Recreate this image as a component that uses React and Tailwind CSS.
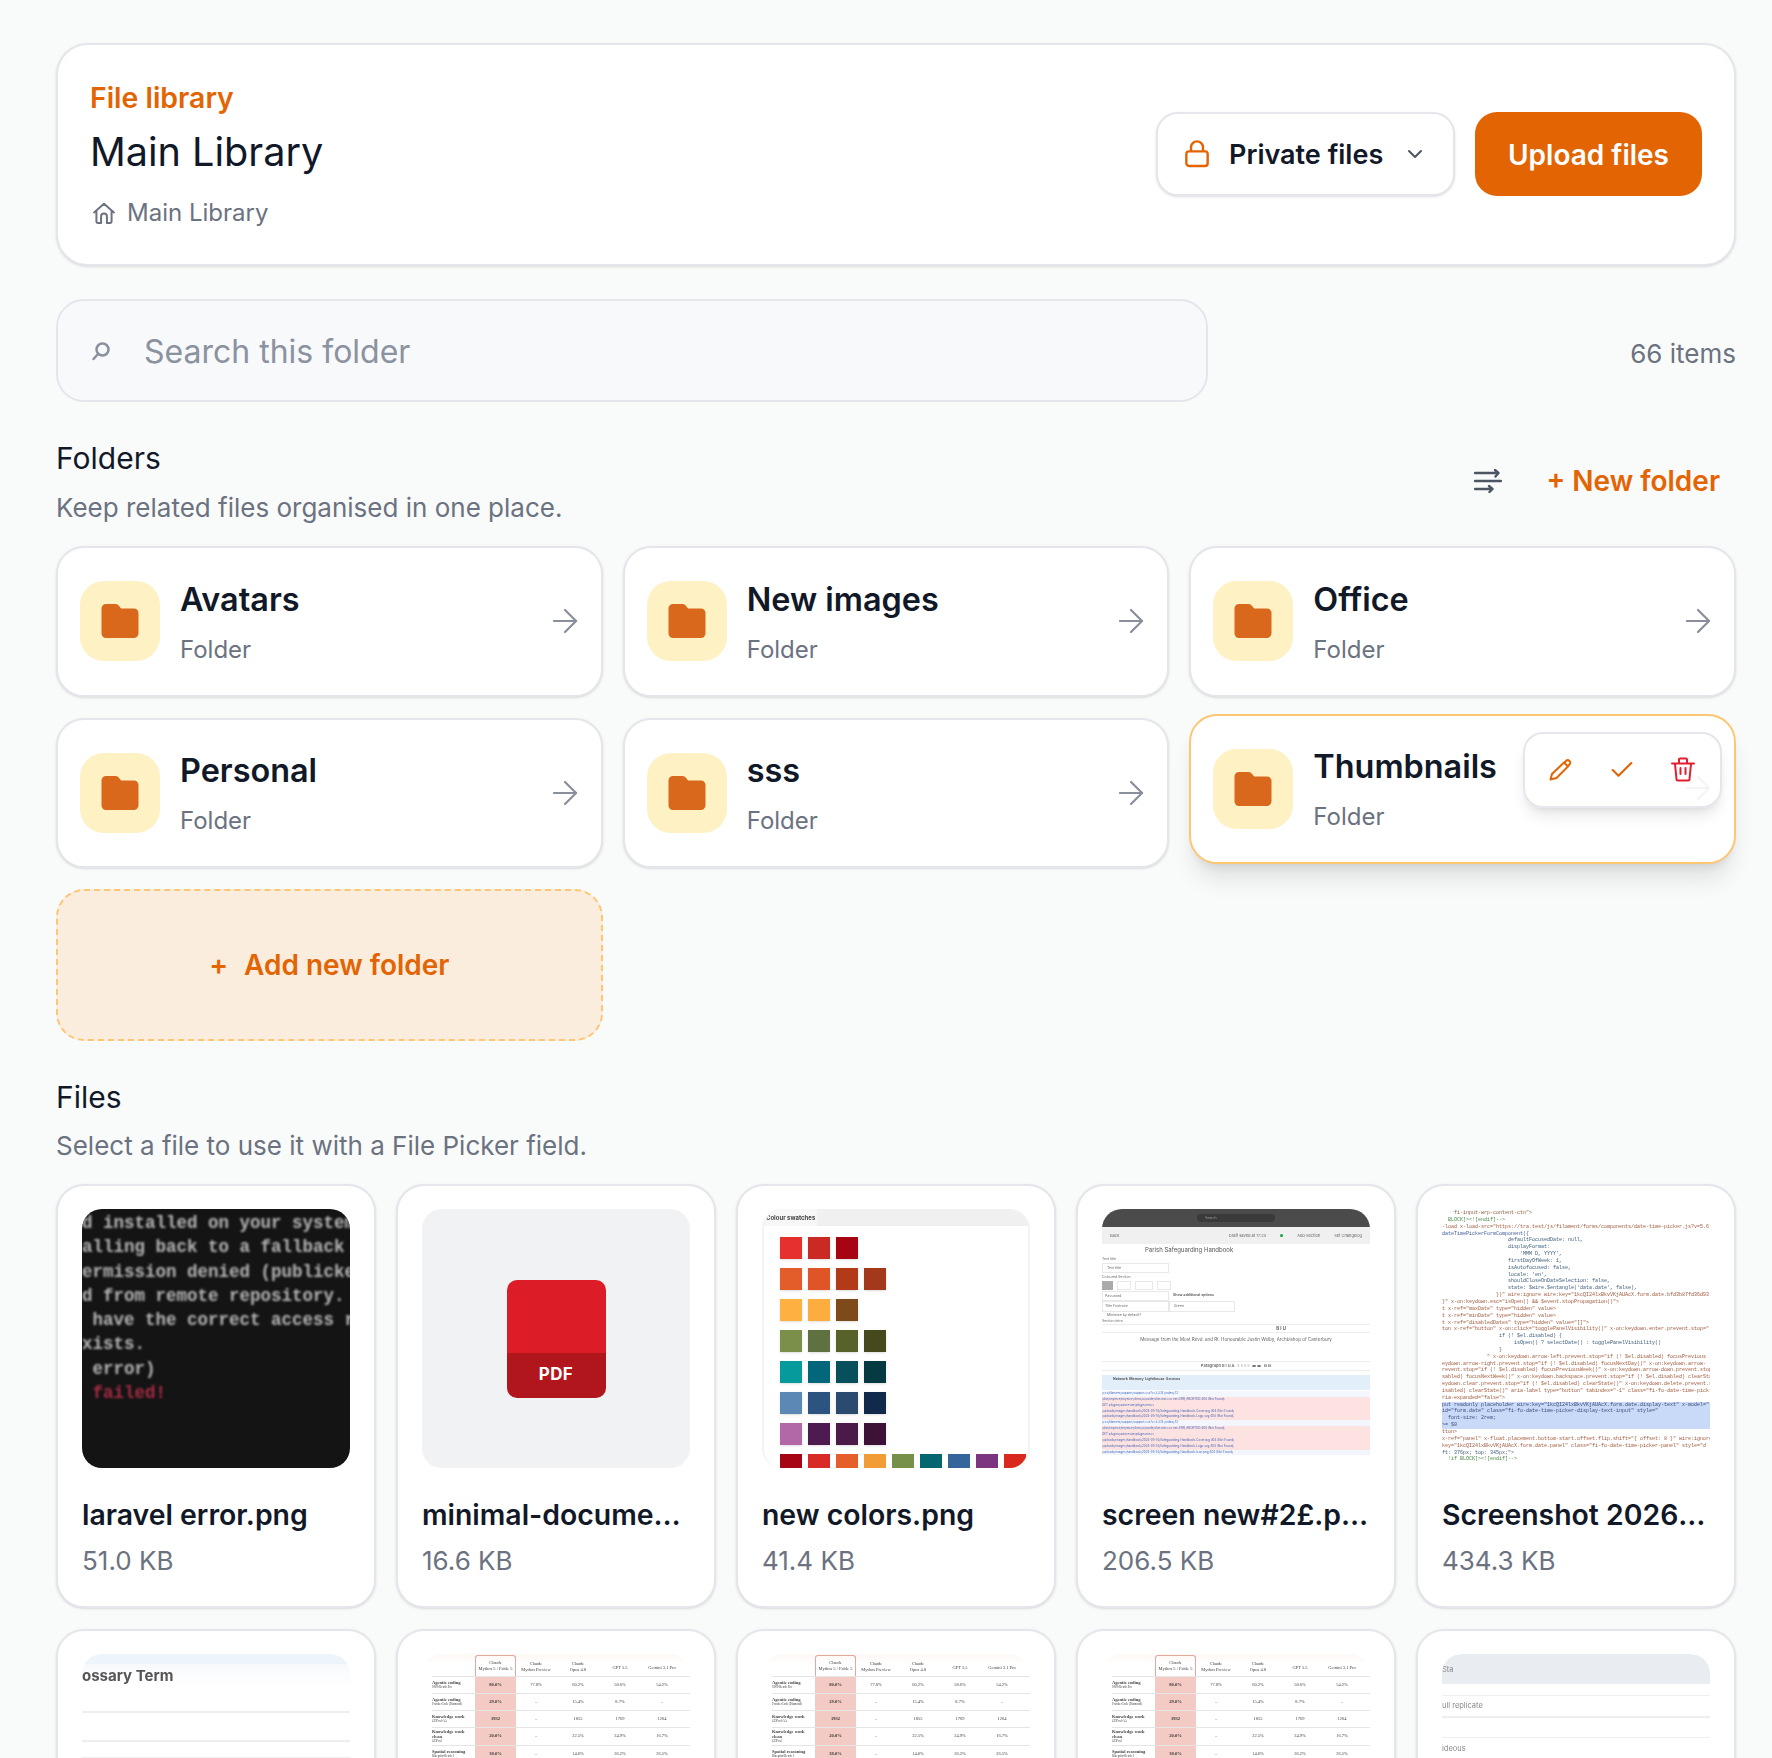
import React from "react"
import { ArrowRight, Check, ChevronDown } from "lucide-react"

const folders = ["Avatars", "New images", "Office", "Personal", "sss"]

const FolderIcon = () => (
	<div className="flex h-20 w-20 shrink-0 items-center justify-center rounded-[24px] bg-[#fef1c4]">
		<svg className="h-9 w-[38px] text-[#d9681d]" viewBox="0 0 38 36" fill="currentColor">
			<path d="M5 1h9.5c1.6 0 2.6.7 3.6 2l2 2.4H33c2.5 0 4.5 2 4.5 4.500V30c0 2.800-2 5-4.500 5H5c-2.700 0-4.500-2.200-4.500-5V5.500C.5 3 2.500 1 5 1z" />
		</svg>
	</div>
)

const FolderCard = ({ name }) => (
	<div className="flex h-[150.500px] items-center gap-5 rounded-[28px] border-2 border-[#e5e6ec] bg-white pl-[22px] pr-[17px] shadow-sm">
		<FolderIcon />
		<div className="min-w-0 flex-1 pt-[3px]">
			<div className="text-[32.400px] leading-[44px] font-semibold text-[#111827]">{name}</div>
			<div className="mt-[10px] text-[24px] leading-[36px] text-[#6b7280]">Folder</div>
		</div>
		<ArrowRight className="h-[38px] w-[38px] text-[#8a8f9c]" strokeWidth={1.4} />
	</div>
)

const terminalLines = [
	["d installed on your system", "text-[#b5b5b5]"],
	["alling back to a fallback", "text-[#b5b5b5]"],
	["ermission denied (publickey", "text-[#b5b5b5]"],
	["d from remote repository.", "text-[#b5b5b5]"],
	[" have the correct access r", "text-[#b5b5b5]"],
	["xists.", "text-[#b5b5b5]"],
	[" error)", "text-[#b5b5b5]"],
	[" failed!", "text-[#a52c42]"],
]

const TerminalThumb = () => (
	<div className="h-[259px] overflow-hidden rounded-[20px] bg-[#141414] pt-[2px]">
		<div className="blur-[1px]">
			{terminalLines.map(([line, color], i) => (
				<div key={i} className={`whitespace-pre font-['Liberation_Mono',monospace] text-[17.500px] leading-[24.300px] font-bold ${color}`}>
					{line}
				</div>
			))}
		</div>
	</div>
)

const PdfThumb = () => (
	<div className="flex h-[259px] items-center justify-center rounded-[20px] bg-[#f1f2f4]">
		<div className="flex h-[118px] w-[99px] flex-col overflow-hidden rounded-[10px]">
			<div className="h-[73px] bg-[#dc1c26]" />
			<div className="flex flex-1 items-center justify-center bg-[#b1161d] text-[17px] font-bold tracking-wide text-white">PDF</div>
		</div>
	</div>
)

const swatchRows = [
	["bg-[#e5302d]", "bg-[#c92a24]", "bg-[#a80313]"],
	["bg-[#e35d2b]", "bg-[#df5527]", "bg-[#b23a18]", "bg-[#a3381b]"],
	["bg-[#feb041]", "bg-[#fdad3f]", "bg-[#7f4a1a]"],
	["bg-[#7c8f4a]", "bg-[#5f7140]", "bg-[#56622a]", "bg-[#45491d]"],
	["bg-[#069a9c]", "bg-[#03677b]", "bg-[#064f5b]", "bg-[#053a42]"],
	["bg-[#5b88b5]", "bg-[#2d5480]", "bg-[#2a4a70]", "bg-[#11294a]"],
	["bg-[#b267a6]", "bg-[#4d1b4f]", "bg-[#4c1a48]", "bg-[#3c1238]"],
]

const lastSwatches = ["bg-[#a70414]", "bg-[#d92b26]", "bg-[#e65f2b]", "bg-[#f19c34]", "bg-[#76904a]", "bg-[#04676f]", "bg-[#34659b]", "bg-[#7c3580]", "bg-[#d9291f]"]

const SwatchThumb = () => (
	<div className="h-[259px] overflow-hidden rounded-[20px] border-x-2 border-[#f3f3f3] bg-white">
		<div className="flex h-[17px] bg-[#f0f0f0]">
			<div className="h-[17px] bg-[#f7f7f7] px-[2px] text-[6px] leading-[17px] font-bold text-[#444] blur-[0.3px]">Colour swatches</div>
		</div>
		<div className="flex flex-col gap-[9px] pl-[16px] pt-[11px]">
			{swatchRows.map((row, i) => (
				<div key={i} className="flex gap-[6px]">
					{row.map(color => <div key={color} className={`h-[22px] w-[22px] shadow-sm ${color}`} />)}
				</div>
			))}
			<div className="flex gap-[6px]">
				{lastSwatches.map(color => <div key={color} className={`h-[22px] w-[22px] shrink-0 ${color}`} />)}
			</div>
		</div>
	</div>
)

const logRows = [
	"/css/filament/support/support.css?v=3.3.14 (index):12",
	"/dist/tinymce/tinymce/skins/ui/oxide/skin.min.css net::ERR_ABORTED 404 (Not Found)",
	"GET plugins/autoresize/plugin.min.js",
	"/uploads/images/handbook/2024-05-14/Safeguarding-Handbook-Cover.jpg 404 (Not Found)",
	"/uploads/images/handbook/2024-05-14/Safeguarding-Handbook-Logo.svg 404 (Not Found)",
	"/css/filament/support/support.css?v=3.3.14 (index):12",
	"/dist/tinymce/tinymce/skins/ui/oxide/skin.min.css net::ERR_ABORTED 404 (Not Found)",
	"GET plugins/autoresize/plugin.min.js",
	"/uploads/images/handbook/2024-05-14/Safeguarding-Handbook-Cover.jpg 404 (Not Found)",
	"/uploads/images/handbook/2024-05-14/Safeguarding-Handbook-Logo.svg 404 (Not Found)",
	"/uploads/images/handbook/2024-05-14/Safeguarding-Handbook-Icon.png 404 (Not Found)",
]

const ScreenThumb = () => (
	<div className="h-[259px] overflow-hidden rounded-t-[20px] bg-white text-[#666]">
		<div className="blur-[0.35px]">
			<div className="flex h-[18px] items-center justify-center bg-[#4b4b4b]">
				<div className="h-[8px] w-[78px] rounded bg-[#3a3a3a] pl-2 text-[3.500px] leading-[8px] text-[#999]">Search</div>
			</div>
			<div className="flex h-[17px] items-center justify-between bg-[#f0f0f0] pl-[8px] pr-[8px] text-[4px]">
				<span>Back</span>
				<span className="flex items-center gap-[14px]">
					<span>Draft saved at 17:24</span>
					<span className="h-[3px] w-[3px] rounded-full bg-green-600" />
					<span>Add Section</span>
					<span>Set Changelog</span>
				</span>
			</div>
			<div className="h-[12px] pl-[43px] text-[6px] leading-[12px] text-[#555]">Parish Safeguarding Handbook</div>
			<div className="h-[7px] text-[3.500px] leading-[7px]">Text title</div>
			<div className="h-[10px] w-[67px] border border-[#e8e8e8] pl-1 text-[3.500px] leading-[8px]">Text title</div>
			<div className="h-[8px] text-[3.500px] leading-[8px]">Coloured Section</div>
			<div className="flex h-[10px] gap-[4px]">
				<div className="h-[9px] w-[11px] bg-[#aaa]" />
				<div className="h-[9px] w-[14px] border border-[#e8e8e8]" />
				<div className="h-[9px] w-[18px] border border-[#e8e8e8]" />
				<div className="h-[9px] w-[14px] border border-[#e8e8e8]" />
			</div>
			<div className="flex h-[10px] text-[3.500px] leading-[9px]">
				<div className="w-[67px] border border-[#e8e8e8] pl-[2px]">Password</div>
				<div className="pl-1 font-bold">Show additional options</div>
			</div>
			<div className="flex h-[11px] text-[3.500px] leading-[9px]">
				<div className="w-[67px] border border-[#e8e8e8] pl-[2px]">Title Footnote</div>
				<div className="w-[66px] border border-[#e8e8e8] pl-1">Green</div>
			</div>
			<div className="h-[6px] pl-[5px] text-[3.500px] leading-[6px]">Minimize by default?</div>
			<div className="h-[6px] text-[3.500px] leading-[6px]">Section intro</div>
			<div className="h-[9px] border-y border-[#ececec] pr-[84px] text-right text-[4.500px] leading-[7px] font-bold">B I U</div>
			<div className="h-[23px] pt-[4px] text-center text-[4.500px] leading-[6px]">Message from the Most Revd. and Rt. Honourable Justin Welby, Archbishop of Canterbury</div>
			<div className="mt-[5px] flex h-[10px] items-center justify-center gap-[3px] border-y border-[#ececec] text-[4px] font-bold text-[#777]">
				Paragraph B I U A &nbsp; ≡ ≡ ≡ ≡ &nbsp; ≔ ≔ &nbsp; ⧉ ⧉
			</div>
			<div className="mt-[4px] h-[15px] bg-[#e3eefb] pl-[11px] text-[3.500px] leading-[9px] font-bold text-[#555]">Network &nbsp;Memory &nbsp;Lighthouse &nbsp;Sources</div>
			<div className="mt-[1px]">
				{logRows.map((row, i) => (
					<div key={i} className={`h-[5.870px] overflow-hidden whitespace-nowrap text-[3px] leading-[5.870px] text-[#4468b8] ${i % 5 === 0 ? "bg-[#f3f7fd]" : "bg-[#fde2e2]"}`}>
						{row}
					</div>
				))}
			</div>
		</div>
	</div>
)

const codeLines = [
	["  =\"fi-input-wrp-content-ctn\">", "text-[#8a5a3a]"],
	["  BLOCK]><![endif]-->", "text-[#4a8a4a]"],
	["-load x-load-src=\"https://tra.test/js/filament/forms/components/date-time-picker.js?v=5.6", "text-[#a0583a]"],
	["dateTimePickerFormComponent({", "text-[#3a5a9a]"],
	["                      defaultFocusedDate: null,", "text-[#3a5a7a]"],
	["                      displayFormat:", "text-[#3a5a7a]"],
	["                          'MMM D, YYYY',", "text-[#3a5a7a]"],
	["                      firstDayOfWeek: 1,", "text-[#3a5a7a]"],
	["                      isAutofocused: false,", "text-[#3a5a7a]"],
	["                      locale: 'en',", "text-[#3a5a7a]"],
	["                      shouldCloseOnDateSelection: false,", "text-[#3a5a7a]"],
	["                      state: $wire.$entangle('data.date', false),", "text-[#3a5a7a]"],
	["                  })\" wire:ignore wire:key=\"1kcQI24lxBkvVKjAUAcX.form.date.bfd3b87fd36d93", "text-[#a0583a]"],
	["}\" x-on:keydown.esc=\"isOpen() && $event.stopPropagation()\">", "text-[#a0583a]"],
	["t x-ref=\"maxDate\" type=\"hidden\" value>", "text-[#a0583a]"],
	["t x-ref=\"minDate\" type=\"hidden\" value>", "text-[#a0583a]"],
	["t x-ref=\"disabledDates\" type=\"hidden\" value=\"[]\">", "text-[#a0583a]"],
	["ton x-ref=\"button\" x-on:click=\"togglePanelVisibility()\" x-on:keydown.enter.prevent.stop=\"", "text-[#a0583a]"],
	["                   if (! $el.disabled) {", "text-[#3a5a7a]"],
	["                        isOpen() ? selectDate() : togglePanelVisibility()", "text-[#3a5a7a]"],
	["                   }", "text-[#3a5a7a]"],
	["               \" x-on:keydown.arrow-left.prevent.stop=\"if (! $el.disabled) focusPrevious", "text-[#a0583a]"],
	["eydown.arrow-right.prevent.stop=\"if (! $el.disabled) focusNextDay()\" x-on:keydown.arrow-", "text-[#a0583a]"],
	["revent.stop=\"if (! $el.disabled) focusPreviousWeek()\" x-on:keydown.arrow-down.prevent.stop", "text-[#a0583a]"],
	["sabled) focusNextWeek()\" x-on:keydown.backspace.prevent.stop=\"if (! $el.disabled) clearSta", "text-[#a0583a]"],
	["eydown.clear.prevent.stop=\"if (! $el.disabled) clearState()\" x-on:keydown.delete.prevent.s", "text-[#a0583a]"],
	["isabled) clearState()\" aria-label type=\"button\" tabindex=\"-1\" class=\"fi-fo-date-time-pick", "text-[#a0583a]"],
	["ria-expanded=\"false\">", "text-[#a0583a]"],
	["put readonly placeholder wire:key=\"1kcQI24lxBkvVKjAUAcX.form.date.display-text\" x-model=\"", "bg-[#c9d9f8] text-[#3a4a7a]"],
	["id=\"form.date\" class=\"fi-fo-date-time-picker-display-text-input\" style=\"", "bg-[#c9d9f8] text-[#3a4a7a]"],
	["  font-size: 2rem;", "bg-[#c9d9f8] text-[#3a4a7a]"],
	[">= $0", "bg-[#c9d9f8] text-[#3a4a7a]"],
	["tton>", "text-[#a0583a]"],
	["x-ref=\"panel\" x-float.placement.bottom-start.offset.flip.shift=\"{ offset: 8 }\" wire:ignore", "text-[#a0583a]"],
	["key=\"1kcQI24lxBkvVKjAUAcX.form.date.panel\" class=\"fi-fo-date-time-picker-panel\" style=\"d", "text-[#a0583a]"],
	["ft: 376px; top: 345px;\">", "text-[#3a5a7a]"],
	["  !if BLOCK]><![endif]-->", "text-[#4a8a4a]"],
]

const CodeThumb = () => (
	<div className="h-[259px] overflow-hidden rounded-[20px] bg-white pt-[1px]">
		<div className="blur-[0.35px]">
			{codeLines.map(([line, color], i) => (
				<div key={i} className={`h-[6.850px] overflow-hidden whitespace-pre font-['Liberation_Mono',monospace] text-[5px] leading-[6.850px] ${color}`}>
					{line}
				</div>
			))}
		</div>
	</div>
)

const tableRows = [
	["Agentic coding", "SWE-Bench Pro", "80.0%", "77.8%", "60.2%", "58.6%", "54.2%", "h-[17px]"],
	["Agentic coding", "FrontierCode (Diamond)", "29.0%", "–", "15.4%", "8.7%", "–", "h-[17px]"],
	["Knowledge work", "GDPval-AA", "1932", "–", "1855", "1769", "1264", "h-[17px]"],
	["Knowledge work clean", "GDPval", "20.0%", "–", "22.5%", "24.9%", "16.7%", "h-[18px]"],
	["Spatial reasoning", "Blueprint-Bench 2", "38.0%", "–", "14.0%", "36.2%", "26.5%", "h-[17px]"],
]

const TableThumb = () => (
	<div className="h-[129px] overflow-hidden rounded-t-[20px] bg-gradient-to-b from-[#fdf8f5] to-white to-[8%] pl-[10px] font-['Liberation_Serif',serif] text-[4.500px] text-[#444]">
		<div className="blur-[0.3px]">
			<div className="flex h-[22px] items-end text-center leading-[6px]">
				<div className="w-[43px]" />
				<div className="h-[21px] w-[41px] rounded-t-[3px] border border-b-0 border-[#e3a79c] pt-[4px]">Claude<br />Mythos 5 / Fable 5</div>
				<div className="w-[40px] pb-[3px]">Claude<br />Mythos Preview</div>
				<div className="w-[44px] pb-[3px]">Claude<br />Opus 4.8</div>
				<div className="w-[40px] pb-[5px]">GPT 5.5</div>
				<div className="w-[44px] pb-[5px]">Gemini 3.1 Pro</div>
			</div>
			{tableRows.map(row => (
				<div key={row[0] + row[1]} className={`flex items-center border-t border-[#e5e5e5] text-center font-bold ${row[7]}`}>
					<div className="w-[43px] text-left leading-[5px]">
						{row[0]}
						<div className="text-[3px] font-normal">{row[1]}</div>
					</div>
					<div className="flex h-full w-[41px] items-center justify-center bg-[#f4cbc4] text-[#333]">{row[2]}</div>
					<div className="w-[40px] font-normal">{row[3]}</div>
					<div className="w-[44px] font-normal">{row[4]}</div>
					<div className="w-[40px] font-normal">{row[5]}</div>
					<div className="w-[44px] font-normal">{row[6]}</div>
				</div>
			))}
		</div>
	</div>
)

const GlossaryThumb = () => (
	<div className="h-[129px] overflow-hidden rounded-t-[20px] bg-white">
		<div className="h-[10px] bg-[#eef5fa]" />
		<div className="h-[24px] bg-gradient-to-b from-[#f7fafc] to-white text-[15px] leading-[24px] font-bold text-[#555] blur-[0.3px]">ossary Term</div>
		<div className="mt-[23px] h-[2px] bg-[#eeeeee]" />
		<div className="mt-[27px] h-[2px] bg-[#eeeeee]" />
		<div className="mt-[15px] h-[2px] bg-[#f0f0f0]" />
	</div>
)

const GreyThumb = () => (
	<div className="h-[129px] overflow-hidden rounded-t-[20px] bg-white text-[7.500px] text-[#888]">
		<div className="h-[30px] bg-[#e9edf2] pt-[10px] blur-[0.6px]">Sta</div>
		<div className="mt-[11px] h-[1px] bg-[#f0f0f0]" />
		<div className="h-[20px] pt-[5px] leading-[10px] blur-[0.6px]">ull replicate</div>
		<div className="h-[2px] bg-[#eeeeee]" />
		<div className="mt-[19px] h-[1px] bg-[#f0f0f0]" />
		<div className="h-[20px] pt-[6px] leading-[10px] blur-[0.6px]">ideous</div>
		<div className="h-[1px] bg-[#f0f0f0]" />
	</div>
)

const FileCard = ({ name, size, children }) => (
	<div className="flex h-[424px] min-w-0 flex-col rounded-[28px] border-2 border-[#e5e6ec] bg-white px-[24px] pt-[23px] shadow-sm">
		{children}
		<div className="mt-[26px] truncate text-[28.400px] leading-[42px] font-semibold text-[#111827]">{name}</div>
		<div className="mt-[5px] text-[26px] leading-[40px] text-[#6b7280]">{size}</div>
	</div>
)

const PartialCard = ({ children }) => (
	<div className="h-[200px] min-w-0 rounded-[28px] border-2 border-[#e5e6ec] bg-white px-[24px] pt-[23px] shadow-sm">
		{children}
	</div>
)

const App = () => {
	return (
		<div className="h-[1758px] overflow-hidden bg-[#f9fafa] pl-[56px] pr-[36px] pt-[43px] font-['Inter',sans-serif]">

			{/* Header */}
			<div className="flex h-[223px] items-center justify-between rounded-[32px] border-2 border-[#e5e6ec] bg-white pl-[32px] pr-[32px] shadow-sm">
				<div className="pb-[1px]">
					<div className="text-[28.400px] leading-[40px] font-semibold text-[#e36403]">File library</div>
					<div className="mt-[6px] text-[39.600px] leading-[56px] text-[#111827]">Main Library</div>
					<div className="mt-[15px] flex items-center gap-[9px] text-[24px] leading-[36px] text-[#6b7280]">
						<svg className="h-7 w-7" fill="none" viewBox="0 0 24 24" stroke="currentColor" strokeWidth="1.7" strokeLinecap="round" strokeLinejoin="round">
							<path d="M3.500 11.500 12 4l8.500 7.500M5.500 10v9a1.500 1.500 0 0 0 1.500 1.500h2.500v-5.500a2.500 2.500 0 0 1 5 0v5.500H17a1.500 1.500 0 0 0 1.500-1.500v-9" />
						</svg>
						Main Library
					</div>
				</div>
				<div className="mt-[-1px] flex items-center gap-[20px]">
					<button className="flex h-[84px] w-[299px] items-center rounded-[22px] border-2 border-[#e5e6ec] bg-white pl-[23px] text-[27px] font-semibold text-[#111827] shadow-sm">
						<svg className="h-8 w-8 text-[#e36403]" fill="none" viewBox="0 0 24 24" stroke="currentColor" strokeWidth="1.800" strokeLinecap="round" strokeLinejoin="round">
							<path d="M7.500 10V7a4.500 4.500 0 0 1 9 0v3M6 10h12a2 2 0 0 1 2 2v7a2 2 0 0 1-2 2H6a2 2 0 0 1-2-2v-7a2 2 0 0 1 2-2z" />
						</svg>
						<span className="ml-[16px] pt-[2px]">Private files</span>
						<ChevronDown className="ml-[20px] h-6 w-6 text-[#4b5563]" strokeWidth={2} />
					</button>
					<button className="h-[84px] w-[227px] rounded-[22px] bg-[#e36403] pt-[2px] text-[28px] font-semibold text-white">Upload files</button>
				</div>
			</div>

			{/* Search */}
			<div className="mt-[33px] flex items-center justify-between">
				<div className="flex h-[103px] w-[1152px] items-center rounded-[28px] border-2 border-[#e5e6ec] bg-[#f8f9fb] pl-[33px] text-[32px] text-[#8b92a0]">
					<svg className="h-[20px] w-[20px] text-[#8a919e]" fill="none" viewBox="0 0 20 20" stroke="currentColor" strokeWidth="2.500" strokeLinecap="round">
						<circle cx="11.500" cy="8.500" r="6" />
						<path d="M7 13 2.500 18" />
					</svg>
					<span className="ml-[33px] pt-[3px]">Search this folder</span>
				</div>
				<div className="pt-[5px] text-[26px] text-[#6b7280]">66 items</div>
			</div>

			{/* Folders */}
			<div className="mt-[32px] flex items-start justify-between">
				<div>
					<div className="text-[30px] leading-[48px] text-[#111827]">Folders</div>
					<div className="mt-[3px] text-[26px] leading-[46px] text-[#6b7280]">Keep related files organised in one place.</div>
				</div>
				<div className="mt-[26px] flex items-center gap-[44px] pr-[16px]">
					<svg className="h-[24px] w-[28px] text-[#4b5563]" fill="none" viewBox="0 0 28 24" stroke="currentColor" strokeWidth="2.400" strokeLinecap="round" strokeLinejoin="round">
						<path d="M1 4h23M21 1l3.500 3-3 3.500M1 12h26M1 20h17M15 17l3.500 3-3 3" />
					</svg>
					<span className="text-[28px] font-semibold text-[#e36403]">+ New folder</span>
				</div>
			</div>

			<div className="mt-[15px] grid grid-cols-3 gap-x-[20px] gap-y-[21px]">
				{folders.map(name => <FolderCard key={name} name={name} />)}

				{/* Hovered folder */}
				<div className="relative -mt-[4px] mb-[4px] flex h-[150.500px] items-center gap-5 rounded-[28px] border-2 border-[#fdc672] bg-white pl-[22px] pr-5 shadow-xl">
					<FolderIcon />
					<div className="min-w-0 flex-1 pt-[3px]">
						<div className="text-[32.400px] leading-[44px] font-semibold text-[#111827]">Thumbnails</div>
						<div className="mt-[10px] text-[24px] leading-[36px] text-[#6b7280]">Folder</div>
					</div>
					<ArrowRight className="absolute right-[17px] top-[53px] h-[38px] w-[38px] text-[#8a8f9c]" strokeWidth={1.4} />
					<div className="absolute right-[12px] top-[16px] flex h-[76px] w-[199px] items-center justify-between rounded-[20px] border-2 border-[#e5e6ec] bg-white/90 pl-[24px] pr-[25px] shadow-lg">
						<svg className="h-[22px] w-[24px] text-[#e36403]" fill="none" viewBox="0 0 24 22" stroke="currentColor" strokeWidth="2" strokeLinecap="round" strokeLinejoin="round">
							<path d="M1.500 20.500 3 15 15 3.500l4 4L7.500 19zM15.500 3.500 17 2a2.300 2.300 0 0 1 3.500 3.500L19 7" />
						</svg>
						<Check className="h-[28px] w-[28px] text-[#e36403]" strokeWidth={1.8} />
						<svg className="h-[25px] w-[24px] text-[#e11d2e]" fill="none" viewBox="0 0 24 25" stroke="currentColor" strokeWidth="2" strokeLinecap="round" strokeLinejoin="round">
							<path d="M1 6.500h22M8 6V2.500a1 1 0 0 1 1-1h6a1 1 0 0 1 1 1V6M4 7l1.500 15a1.500 1.500 0 0 0 1.500 1.500h10a1.500 1.500 0 0 0 1.500-1.500L20 7M9.500 11v6M14.500 11v6" />
						</svg>
					</div>
				</div>

				<div className="flex h-[152px] items-center justify-center rounded-[28px] border-2 border-dashed border-[#fdc672] bg-[#fbeddd] text-[28px] font-semibold text-[#e36403]">
					<span className="mr-[16px]">+</span>
					Add new folder
				</div>
			</div>

			{/* Files */}
			<div className="mt-[32px] text-[30px] leading-[48px] text-[#111827]">Files</div>
			<div className="mt-[2px] text-[26px] leading-[46px] text-[#6b7280]">Select a file to use it with a File Picker field.</div>

			<div className="mt-[15px] grid grid-cols-5 gap-x-[20px] gap-y-[21px]">
				<FileCard name="laravel error.png" size="51.0 KB"><TerminalThumb /></FileCard>
				<FileCard name="minimal-document.pdf" size="16.6 KB"><PdfThumb /></FileCard>
				<FileCard name="new colors.png" size="41.4 KB"><SwatchThumb /></FileCard>
				<FileCard name="screen new#2£.png" size="206.5 KB"><ScreenThumb /></FileCard>
				<FileCard name="Screenshot 2026-04-12.png" size="434.3 KB"><CodeThumb /></FileCard>
				<PartialCard><GlossaryThumb /></PartialCard>
				<PartialCard><TableThumb /></PartialCard>
				<PartialCard><TableThumb /></PartialCard>
				<PartialCard><TableThumb /></PartialCard>
				<PartialCard><GreyThumb /></PartialCard>
			</div>

		</div>
	)
}

export default App
